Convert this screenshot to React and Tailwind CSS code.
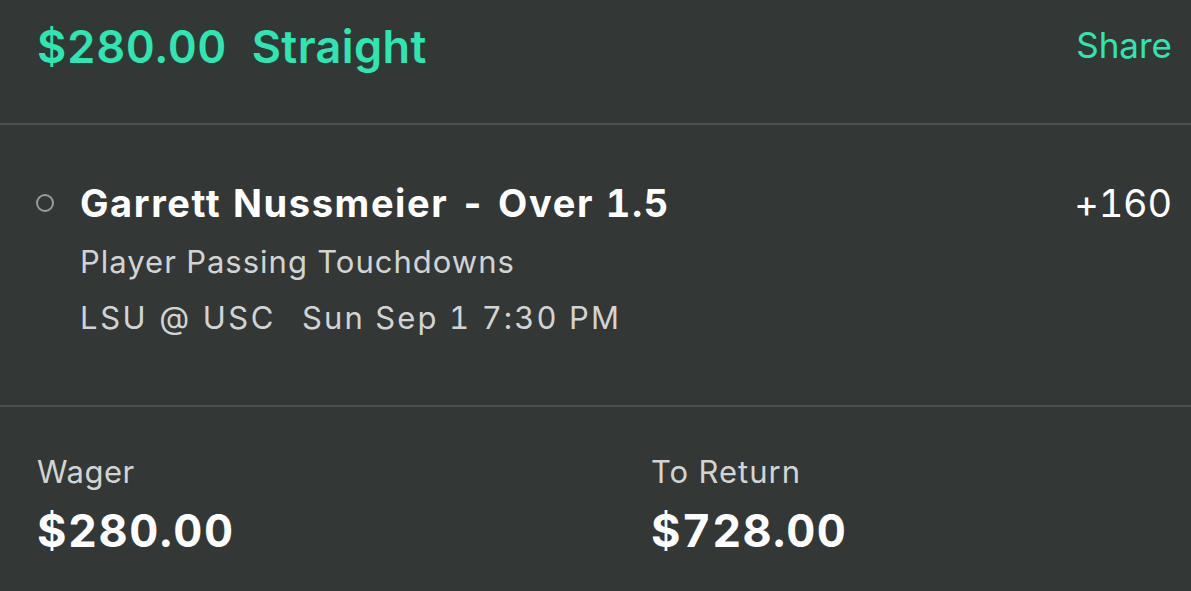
export default function App() {
  return (
    <div
      className="w-[1191px] h-[591px] bg-[#333837] overflow-hidden tabular-nums"
      style={{ fontFamily: "Inter, 'Noto Sans', sans-serif" }}
    >
      <div className="h-[123px] flex justify-between items-start pl-[37px] pr-[19px] pt-[23px]">
        <div className="text-[#2de6b1] text-[45px] font-semibold leading-[48px] tracking-[0.4px]">
          $280.00&nbsp;&nbsp;Straight
        </div>
        <div className="text-[#2de6b1] text-[35px] leading-[40px] pt-[2px]">Share</div>
      </div>
      <div className="h-[2px] bg-[#4b504f]" />
      <div className="h-[280px] pl-[36px] pr-[19px] pt-[56px]">
        <div className="flex items-center justify-between">
          <div className="flex items-center">
            <div className="w-[18px] h-[18px] rounded-full border-2 border-[#9a9d9c]" />
            <div className="ml-[26px] text-white text-[38px] font-bold leading-[44px] tracking-[1.6px]">
              Garrett Nussmeier - Over 1.5
            </div>
          </div>
          <div className="text-white text-[38px] leading-[44px] tracking-[-0.2px]">+160</div>
        </div>
        <div className="pl-[44px] text-[#d2d4d3] text-[31px] leading-[36px] mt-[19px] tracking-[1px]">
          Player Passing Touchdowns
        </div>
        <div className="pl-[44px] flex text-[#d2d4d3] text-[31px] leading-[36px] mt-[20px]">
          <span className="tracking-[2.6px]">LSU @ USC</span>
          <span className="ml-[26px] tracking-[2.1px]">Sun Sep 1 7:30 PM</span>
        </div>
      </div>
      <div className="h-[2px] bg-[#4b504f]" />
      <div className="flex pl-[37px] pt-[47px]">
        <div className="w-[614px]">
          <div className="text-[#d2d4d3] text-[31px] leading-[36px] tracking-[0.5px]">Wager</div>
          <div className="text-white text-[45px] font-bold leading-[50px] mt-[16px] tracking-[1.5px]">$280.00</div>
        </div>
        <div>
          <div className="text-[#d2d4d3] text-[31px] leading-[36px] tracking-[1px]">To Return</div>
          <div className="text-white text-[45px] font-bold leading-[50px] mt-[16px] tracking-[1.3px]">$728.00</div>
        </div>
      </div>
    </div>
  );
}
